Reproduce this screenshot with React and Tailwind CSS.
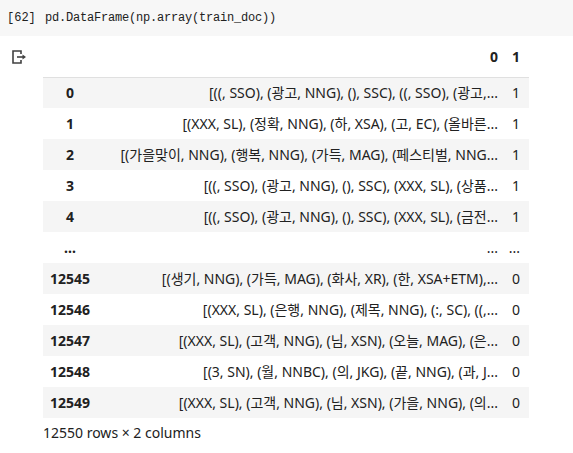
import React from 'react';

const rows = [
  ['0', '[((, SSO), (광고, NNG), (), SSC), ((, SSO), (광고,...', '1'],
  ['1', '[(XXX, SL), (정확, NNG), (하, XSA), (고, EC), (올바른...', '1'],
  ['2', '[(가을맞이, NNG), (행복, NNG), (가득, MAG), (페스티벌, NNG...', '1'],
  ['3', '[((, SSO), (광고, NNG), (), SSC), (XXX, SL), (상품...', '1'],
  ['4', '[((, SSO), (광고, NNG), (), SSC), (XXX, SL), (금전...', '1'],
  ['...', '...', '...'],
  ['12545', '[(생기, NNG), (가득, MAG), (화사, XR), (한, XSA+ETM),...', '0'],
  ['12546', '[(XXX, SL), (은행, NNG), (제목, NNG), (:, SC), ((,...', '0'],
  ['12547', '[(XXX, SL), (고객, NNG), (님, XSN), (오늘, MAG), (은...', '0'],
  ['12548', '[(3, SN), (월, NNBC), (의, JKG), (끝, NNG), (과, J...', '0'],
  ['12549', '[(XXX, SL), (고객, NNG), (님, XSN), (가을, NNG), (의...', '0'],
];

const OutputIcon = () => (
  <svg width="18" height="16" viewBox="0 0 18 16" className="text-[#424242]">
    <path d="M10 5V2H2v12h8v-3" fill="none" stroke="currentColor" strokeWidth="1.6" />
    <path d="M6 8h6" stroke="currentColor" strokeWidth="1.6" />
    <path d="M11.5 5.5L15 8l-3.5 2.5z" fill="currentColor" />
  </svg>
);

export default function App() {
  return (
    <div className="w-[573px] h-[453px] bg-white text-[#212121]">
      <div className="h-[36px] bg-[#f7f7f7] flex items-center font-['Liberation_Mono',monospace] text-[12px]">
        <span className="w-[45px] pl-[7px] text-[#212121]">[62]</span>
        <span className="tracking-[-0.2px]">pd.DataFrame(np.array(train_doc))</span>
      </div>
      <div className="flex pt-[10px]">
        <div className="w-[43px] pl-[11px] pt-[3px]">
          <OutputIcon />
        </div>
        <div className="font-['Noto_Sans','Noto_Sans_CJK_KR',sans-serif] text-[14px]">
          <table className="table-fixed border-collapse w-[486px]">
            <colgroup>
              <col className="w-[54px]" />
              <col className="w-[408px]" />
              <col className="w-[24px]" />
            </colgroup>
            <thead>
              <tr className="h-[31px] border-b border-[#e0e0e0]">
                <th></th>
                <th className="text-right align-top pt-0 pr-[7px] font-bold">0</th>
                <th className="text-right align-top pt-0 pr-[9px] font-bold">1</th>
              </tr>
            </thead>
            <tbody>
              {rows.map((r, i) => (
                <tr key={i} className={`h-[31px] ${i % 2 === 0 ? 'bg-[#f5f5f5]' : 'bg-white'}`}>
                  <th className="text-center font-bold">{r[0]}</th>
                  <td className="text-right pr-[7px] whitespace-nowrap overflow-hidden">{r[1]}</td>
                  <td className="text-right pr-[9px]">{r[2]}</td>
                </tr>
              ))}
            </tbody>
          </table>
          <div className="mt-[4px]">12550 rows × 2 columns</div>
        </div>
      </div>
    </div>
  );
}
